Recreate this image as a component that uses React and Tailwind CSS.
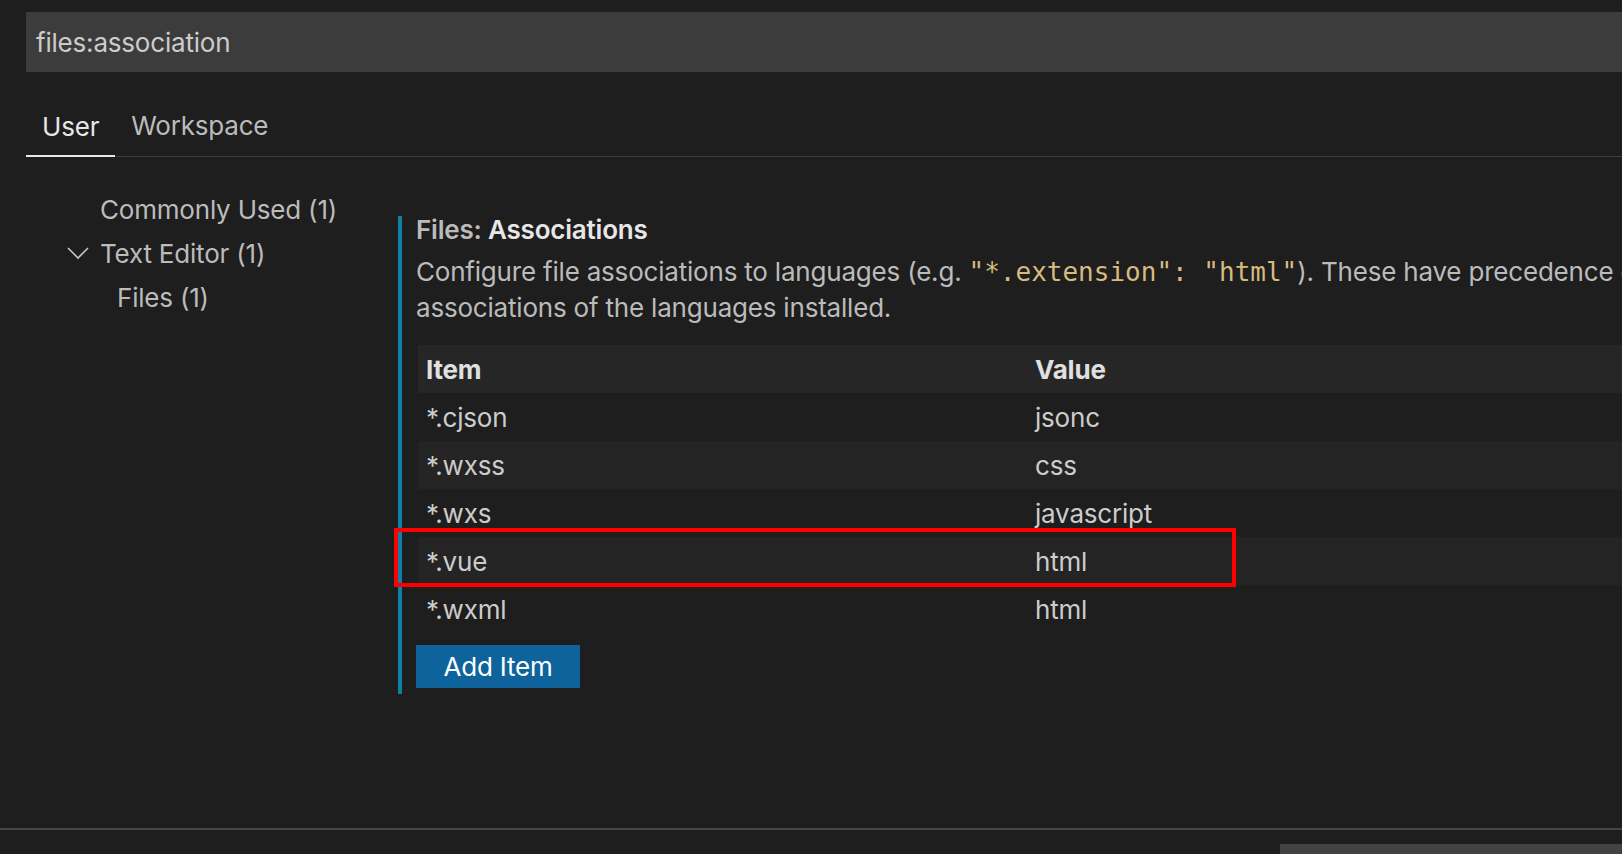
import React from "react";

const rows = [
    { item: "*.cjson", value: "jsonc" },
    { item: "*.wxss", value: "css" },
    { item: "*.wxs", value: "javascript" },
    { item: "*.vue", value: "html" },
    { item: "*.wxml", value: "html" },
];

const Chevron = () => (
    <svg width="32" height="20" viewBox="0 0 32 20" className="shrink-0">
        <polyline points="6,5 16,15 26,5" fill="none" stroke="#c5c5c5" strokeWidth="1.6" />
    </svg>
);

export default function App() {
    return (
        <div
            className="relative w-[1622px] h-[854px] overflow-hidden bg-[#1e1e1e] text-[#cccccc] flex flex-col tracking-[-0.2px]"
            style={{ fontFamily: 'Inter, "Noto Sans", sans-serif' }}
        >
            {/* search */}
            <div className="mt-[12px] ml-[26px] h-[60px] bg-[#3c3c3c] flex items-center pl-[10px] text-[26px] text-[#cccccc] shrink-0">
                files:association
            </div>

            {/* tabs */}
            <div className="ml-[26px] h-[85px] flex items-end border-b border-[#3e3e3e] shrink-0">
                <div className="px-[16px] pb-[10px] -mb-px border-b-2 border-[#e7e7e7] text-[26px] leading-[36px] text-[#e7e7e7]">User</div>
                <div className="px-[16px] pb-[12px] text-[26px] leading-[36px] text-[#bbbbbb]">Workspace</div>
            </div>

            {/* body */}
            <div className="flex-1 flex ml-[26px] pt-[30px] min-h-0">
                <div className="w-[372px] shrink-0 text-[26px] text-[#bbbbbb]">
                    <div className="h-[44px] flex items-center pl-[74px]">Commonly Used (1)</div>
                    <div className="h-[44px] flex items-center pl-[36px]">
                        <Chevron />
                        <span className="ml-[6px]">Text Editor (1)</span>
                    </div>
                    <div className="h-[44px] flex items-center pl-[91px]">Files (1)</div>
                </div>

                <div className="mt-[29px] self-start border-l-4 border-[#0f7fa6] pl-[14px] pb-[6px] flex-1 min-w-0">
                    <div className="pt-[2px] text-[26px] leading-[24px] font-semibold whitespace-nowrap">
                        <span className="text-[#bbbbbb]">Files: </span>
                        <span className="text-[#e7e7e7]">Associations</span>
                    </div>
                    <div className="mt-[12px] text-[26px] leading-[36px] text-[#bbbbbb] whitespace-nowrap">
                        <div>
                            Configure file associations to languages (e.g.{" "}
                            <span className="text-[#d7ba7d] tracking-normal" style={{ fontFamily: '"DejaVu Sans Mono", monospace' }}>"*.extension": "html"</span>
                            ). These have precedence over the default
                        </div>
                        <div>associations of the languages installed.</div>
                    </div>

                    <div className="mt-[19px] ml-[2px] text-[26px] whitespace-nowrap">
                        <div className="h-[48px] flex items-center bg-[#262626] font-bold text-[#e0e0e0]">
                            <div className="w-[617px] pl-[8px]">Item</div>
                            <div>Value</div>
                        </div>
                        {rows.map((r, i) => (
                            <div key={r.item} className={"h-[48px] flex items-center text-[#cccccc] " + (i % 2 === 1 ? "bg-[#242424]" : "")}>
                                <div className="w-[617px] pl-[8px]">{r.item}</div>
                                <div>{r.value}</div>
                            </div>
                        ))}
                    </div>

                    <button className="mt-[12px] w-[164px] h-[43px] bg-[#0e639c] text-white text-[26px] flex items-center justify-center">
                        Add Item
                    </button>
                </div>
            </div>

            {/* bottom panel edge */}
            <div className="h-[26px] border-t-2 border-[#454545] flex justify-end items-end shrink-0">
                <div className="w-[342px] h-[10px] bg-[#424242]" />
            </div>

            {/* annotation */}
            <div className="absolute left-[394px] top-[528px] w-[842px] h-[59px] border-4 border-[#ff0000]" />
        </div>
    );
}
